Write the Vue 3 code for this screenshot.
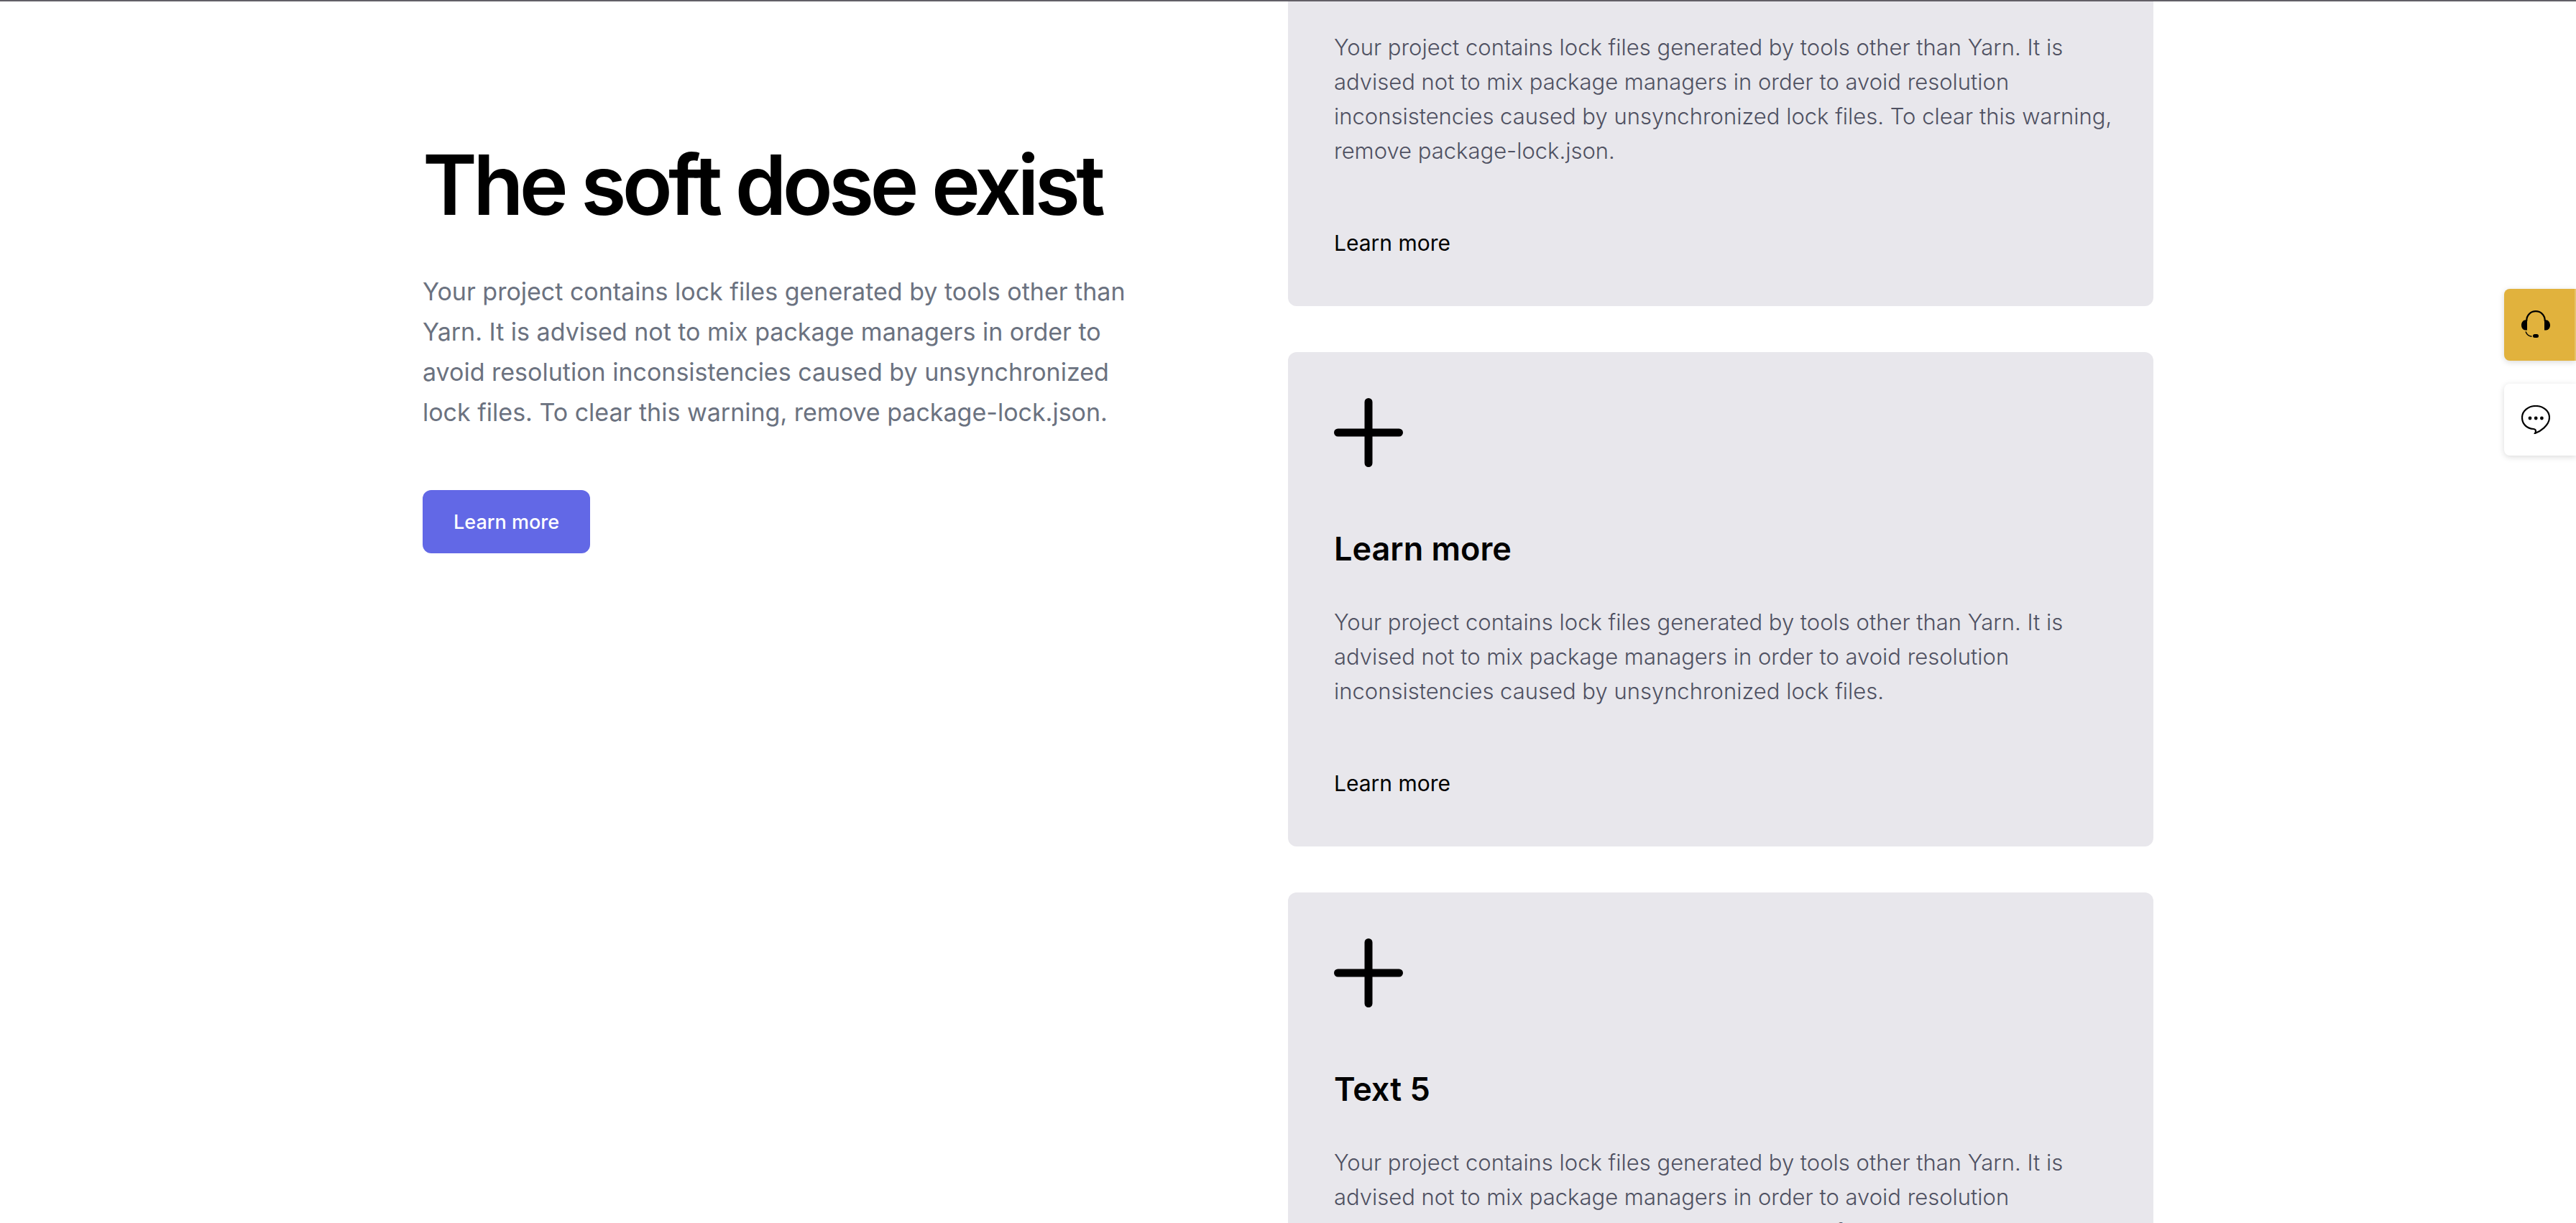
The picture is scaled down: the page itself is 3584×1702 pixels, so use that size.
<script setup>
const lead =
  'Your project contains lock files generated by tools other than Yarn. It is advised not to mix package managers in order to avoid resolution inconsistencies caused by unsynchronized lock files. To clear this warning, remove package-lock.json.'

const short =
  'Your project contains lock files generated by tools other than Yarn. It is advised not to mix package managers in order to avoid resolution inconsistencies caused by unsynchronized lock files.'

const cards = [
  { title: '', text: lead },
  { title: 'Learn more', text: short },
  { title: 'Text 5', text: short },
]
</script>

<template>
  <div class="page">
    <main class="container">
      <section class="intro">
        <h1>The soft dose exist</h1>
        <p>{{ lead }}</p>
        <button type="button" class="primary">Learn more</button>
      </section>

      <section class="cards">
        <article
          v-for="(card, i) in cards"
          :key="i"
          class="card"
          :class="{ 'card--continued': !card.title }"
        >
          <template v-if="card.title">
            <svg class="plus" viewBox="0 0 96 96" aria-hidden="true">
              <path d="M48 5.500V90.500M5.500 48H90.500" />
            </svg>
            <h2>{{ card.title }}</h2>
          </template>
          <p>{{ card.text }}</p>
          <a href="#">Learn more</a>
        </article>
      </section>
    </main>

    <aside class="floating">
      <button type="button" class="tool tool--support" aria-label="Support">
        <svg viewBox="0 0 40 40" aria-hidden="true">
          <path class="line" d="M7.200 15V14.500C7.200 6.500 13 1.200 20 1.200S32.800 6.500 32.800 14.500V15" />
          <path d="M8 13.200V27.500H5.500C2.500 27.500 0 24.500 0 20.500S2.500 13.200 6 13.200ZM32 13.200V27.500H34.500C37.500 27.500 40 24.500 40 20.500S37.500 13.200 34 13.200Z" />
          <path class="thin" d="M6 29.500C7.500 33.500 10.500 35.800 14.500 36.200" />
          <rect x="16" y="33" width="8" height="5" rx="2.500" />
        </svg>
      </button>
      <button type="button" class="tool" aria-label="Chat">
        <svg viewBox="0 0 40 40" aria-hidden="true">
          <path
            class="line"
            d="M20 1C9.500 1 1 8 1 17C1 26.500 8 32.500 17 33C19 33.200 20 34.200 20 36C20 37.200 19.600 38 19 39C25 37 39 28.500 39 17C39 8 30.500 1 20 1Z"
          />
          <circle cx="12" cy="18" r="2.400" />
          <circle cx="20.200" cy="18" r="2.400" />
          <circle cx="28.400" cy="18" r="2.400" />
        </svg>
      </button>
    </aside>
  </div>
</template>

<style>
body {
  margin: 0;
  background: #fff;
}
</style>

<style scoped>
.page {
  box-sizing: border-box;
  height: 100vh;
  overflow: hidden;
  border-top: 2px solid #625f66;
  font-family: Inter, 'Liberation Sans', sans-serif;
  color: #000;
}

.container {
  display: grid;
  grid-template-columns: 1fr 1fr;
  align-items: start;
  max-width: 2408px;
  margin: 0 auto;
}

h1,
h2,
p {
  margin: 0;
}

.intro {
  max-width: 984px;
  padding-top: 196px;
}

h1 {
  font-size: 115px;
  font-weight: 600;
  line-height: 120px;
  letter-spacing: -0.05em;
  white-space: nowrap;
}

.intro p {
  margin-top: 60px;
  font-size: 34px;
  line-height: 56px;
  color: #6b7280;
}

.primary {
  height: 88px;
  margin-top: 80px;
  padding: 0 43px;
  border: 0;
  border-radius: 12px;
  background: #6268e6;
  color: #fff;
  font: 500 27px Inter, 'Liberation Sans', sans-serif;
}

.cards {
  display: flex;
  flex-direction: column;
  gap: 64px;
}

.card {
  display: flex;
  flex-direction: column;
  align-items: flex-start;
  padding: 64px 48px 64px 64px;
  border-radius: 12px;
  background: #e8e7ec;
}

.card--continued {
  padding-top: 40px;
  border-top-left-radius: 0;
  border-top-right-radius: 0;
}

.plus {
  width: 96px;
  height: 96px;
  margin-bottom: 82px;
  fill: none;
  stroke: #000;
  stroke-width: 11;
  stroke-linecap: round;
}

h2 {
  margin-bottom: 46px;
  font-size: 45px;
  font-weight: 600;
  line-height: 64px;
}

.card p {
  font-size: 31px;
  font-weight: 300;
  line-height: 48px;
  color: #4f5162;
}

.card a {
  margin-top: 80px;
  font-size: 30px;
  line-height: 48px;
  color: #000;
  text-decoration: none;
}

.floating {
  position: fixed;
  top: 402px;
  right: 0;
  display: flex;
  flex-direction: column;
  gap: 32px;
}

.tool {
  display: flex;
  align-items: center;
  width: 100px;
  height: 100px;
  padding: 0 24px;
  border: 0;
  border-radius: 8px 0 0 8px;
  background: #fff;
  box-shadow: 0 2px 8px rgba(0, 0, 0, 0.15);
}

.tool--support {
  border-right: 2px solid #e8c369;
  background: #e1b23d;
}

.tool svg {
  width: 40px;
  height: 40px;
  flex: none;
}

.line {
  fill: none;
  stroke: #000;
  stroke-width: 2.2;
}

.thin {
  fill: none;
  stroke: #000;
  stroke-width: 1.4;
}
</style>
